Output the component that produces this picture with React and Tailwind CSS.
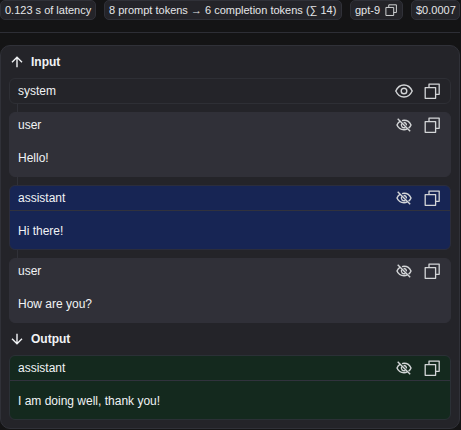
import React from "react";

function CopyIcon({ className }) {
  return (
    <svg viewBox="0 0 16 16" className={className} fill="none" stroke="currentColor" strokeWidth="1.3" strokeLinejoin="round">
      <path d="M1.200 4.600H11.600V15.300H1.200z" />
      <path d="M5 4.600V1.100H15.200V11.300H11.600" />
    </svg>
  );
}

function EyeIcon() {
  return (
    <svg viewBox="0 0 18 14" className="h-[14px] w-[18px]" fill="none" stroke="currentColor" strokeWidth="1.4">
      <path d="M0.8 7C2.5 3.2 5.5 1 9 1s6.500 2.200 8.200 6C15.500 10.800 12.500 13 9 13S2.500 10.800 0.800 7z" />
      <circle cx="9" cy="7" r="2.8" />
    </svg>
  );
}

function EyeOffIcon() {
  return (
    <svg viewBox="0 0 16 14" className="mr-px h-[14px] w-4" fill="none" stroke="currentColor" strokeWidth="1.4">
      <path d="M4.300 3.200C2.700 4.100 1.600 5.500 1 7c1.200 2.900 3.800 4.700 7 4.700 1.200 0 2.300-.3 3.300-.8" />
      <path d="M6 2.600C6.600 2.400 7.300 2.300 8 2.300c3.200 0 5.800 1.800 7 4.700-.5 1.300-1.300 2.300-2.400 3.100" />
      <path d="M5.700 5.600A2.700 2.700 0 0 0 9.400 9.300M7.600 4.600a2.500 2.500 0 0 1 2.800 2.800" />
      <path d="M1.700 0.700L14.200 13.200" />
    </svg>
  );
}

function Arrow({ down }) {
  return (
    <svg viewBox="0 0 12 12" className={down ? "h-3 w-3 rotate-180" : "h-3 w-3"} fill="none" stroke="currentColor" strokeWidth="1.4">
      <path d="M6 11.300V1.500M1 6.300L6 1.300l5 5" />
    </svg>
  );
}

function Pill({ className, children }) {
  return (
    <div className={`flex h-5 shrink-0 items-center whitespace-nowrap rounded-[5px] border border-[#303138] bg-[#242429] px-1 ${className}`}>
      {children}
    </div>
  );
}

const tones = {
  system: "border-[#2e2f35] bg-[#242429]",
  user: "border-[#303038] bg-[#303038]",
  assistant: "border-[#2b2d3c] bg-[#172554]",
  output: "border-[#2b3036] bg-[#14291e]",
};

function Message({ role, text, tone }) {
  return (
    <div className={`relative flex flex-col rounded-md border ${tones[tone]}`}>
      <div className="flex h-6 items-center pl-2 pr-[10px]">
        <span className="grow">{role}</span>
        <span className="flex items-center gap-[11px] text-[#d3d5d7]">
          {text ? <EyeOffIcon /> : <EyeIcon />}
          <CopyIcon className="h-4 w-4" />
        </span>
      </div>
      {text && (
        <div className={`flex h-[39px] items-center border-t px-2 pt-px ${tone === "user" ? "border-[#303038]" : "border-[#31323d]"}`}>
          {text}
        </div>
      )}
    </div>
  );
}

function Heading({ down, children }) {
  return (
    <div className="flex h-8 items-center gap-2 pl-[2px] font-bold">
      <Arrow down={down} />
      <span>{children}</span>
    </div>
  );
}

export default function App() {
  return (
    <div className="h-[430px] w-[461px] overflow-hidden bg-[#141415] font-['Liberation_Sans',Arial,sans-serif] text-[12px] text-[#f1f3f5]">
      <div className="flex gap-2 text-[11px] text-[#e4e6e8]">
        <Pill className="w-[96px]">0.123 s of latency</Pill>
        <Pill className="w-[238px]">8 prompt tokens → 6 completion tokens (∑ 14)</Pill>
        <Pill className="w-[53px] justify-between">
          gpt-9
          <CopyIcon className="mr-px h-3 w-3 text-[#d3d5d7]" />
        </Pill>
        <Pill className="w-[49px]">$0.0007</Pill>
      </div>
      <div className="mt-3 h-px w-[460px] bg-[#2d2e35]" />
      <div className="mt-3 h-[384px] w-[460px] rounded-[10px] border border-[#303138] bg-[#242429] px-2">
        <Heading>Input</Heading>
        <div className="relative flex flex-col gap-2">
          <div className="absolute bottom-2 left-2 top-2 w-px bg-[#303138]" />
          <Message role="system" tone="system" />
          <Message role="user" text="Hello!" tone="user" />
          <Message role="assistant" text="Hi there!" tone="assistant" />
          <Message role="user" text="How are you?" tone="user" />
        </div>
        <Heading down>Output</Heading>
        <Message role="assistant" text="I am doing well, thank you!" tone="output" />
      </div>
    </div>
  );
}
